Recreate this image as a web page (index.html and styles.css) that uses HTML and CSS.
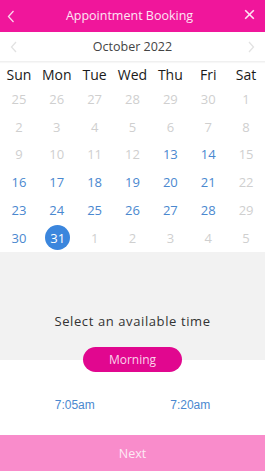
FILE: index.html
```html
<!DOCTYPE html>
<html>
<head>
<meta charset="utf-8">
<link rel="stylesheet" href="styles.css">
</head>
<body>
<div class="app">
  <header class="topbar">
    <svg class="icon back" width="8" height="13" viewBox="0 0 8 13"><path d="M6.5 1 L1.5 6.5 L6.5 12" fill="none" stroke="#fbd6ec" stroke-width="1.3"/></svg>
    <div class="title">Appointment Booking</div>
    <svg class="icon close" width="11" height="11" viewBox="0 0 11 11"><path d="M1.2 1.2 L9.8 9.8 M9.8 1.2 L1.2 9.8" fill="none" stroke="#fde4f3" stroke-width="1.6"/></svg>
  </header>
  <div class="monthbar">
    <svg width="8" height="12" viewBox="0 0 8 12"><path d="M6 1 L1.5 6 L6 11" fill="none" stroke="#e2e2e2" stroke-width="1.3"/></svg>
    <div class="month">October 2022</div>
    <svg width="8" height="12" viewBox="0 0 8 12"><path d="M2 1 L6.5 6 L2 11" fill="none" stroke="#e2e2e2" stroke-width="1.3"/></svg>
  </div>
  <div class="calendar">
    <div class="wd">Sun</div><div class="wd">Mon</div><div class="wd">Tue</div><div class="wd">Wed</div><div class="wd">Thu</div><div class="wd">Fri</div><div class="wd">Sat</div>
    <div class="d off">25</div><div class="d off">26</div><div class="d off">27</div><div class="d off">28</div><div class="d off">29</div><div class="d off">30</div><div class="d off">1</div>
    <div class="d off">2</div><div class="d off">3</div><div class="d off">4</div><div class="d off">5</div><div class="d off">6</div><div class="d off">7</div><div class="d off">8</div>
    <div class="d off">9</div><div class="d off">10</div><div class="d off">11</div><div class="d off">12</div><div class="d on">13</div><div class="d on">14</div><div class="d off">15</div>
    <div class="d on">16</div><div class="d on">17</div><div class="d on">18</div><div class="d on">19</div><div class="d on">20</div><div class="d on">21</div><div class="d off">22</div>
    <div class="d on">23</div><div class="d on">24</div><div class="d on">25</div><div class="d on">26</div><div class="d on">27</div><div class="d on">28</div><div class="d off">29</div>
    <div class="d on">30</div><div class="d sel"><span>31</span></div><div class="d off">1</div><div class="d off">2</div><div class="d off">3</div><div class="d off">4</div><div class="d off">5</div>
  </div>
  <section class="prompt">
    <div class="prompt-text">Select an available time</div>
  </section>
  <div class="period-wrap">
    <div class="period">Morning</div>
  </div>
  <div class="times">
    <div class="time">7:05am</div>
    <div class="time">7:20am</div>
  </div>
  <div class="spacer"></div>
  <footer class="next">Next</footer>
</div>
</body>
</html>
```
FILE: styles.css
```css
* { box-sizing: border-box; }
html, body { margin: 0; padding: 0; background: #fff; }
body { font-family: "Open Sans", "Noto Sans", sans-serif; }
.app { width: 265px; height: 471px; display: flex; flex-direction: column; overflow: hidden; }
.topbar {
  height: 32px; background: #f0169b; display: flex; align-items: center;
  justify-content: space-between; padding: 0 10px 0 7px; flex: none;
}
.topbar .back { margin-top: 1px; }
.topbar .close { margin-top: -4px; }
.title { color: #fde6f4; font-size: 12.5px; margin-top: -1px; }
.monthbar {
  height: 30px; display: flex; align-items: center; justify-content: space-between;
  padding: 0 10px 0 10px; border-bottom: 1px solid #f0f0f0; flex: none;
  box-shadow: 0 1px 1px rgba(0,0,0,0.03);
}
.month { color: #444; font-size: 12.5px; }
.calendar {
  display: grid; grid-template-columns: repeat(7, 1fr);
  grid-template-rows: 23px repeat(6, 27.8px); flex: none;
}
.wd { color: #1a1a1a; font-size: 14px; display: flex; align-items: center; justify-content: center; padding-top: 1px; }
.d { font-size: 13px; display: flex; align-items: center; justify-content: center; }
.d.off { color: #cfcfcf; }
.d.on { color: #4a88cf; }
.d.sel span {
  width: 25px; height: 25px; border-radius: 50%; background: #3b86dd; color: #fff;
  display: flex; align-items: center; justify-content: center; margin-left: 2px;
}
.prompt {
  background: #f2f2f2; height: 108px; display: flex; align-items: flex-end;
  justify-content: center; padding-bottom: 30px; flex: none;
}
.prompt-text { color: #333; font-size: 13px; letter-spacing: 0.6px; }
.period-wrap { display: flex; justify-content: center; margin-top: -13px; flex: none; }
.period {
  width: 99px; height: 25px; border-radius: 13px; background: #e1078f; color: #fbd3ea;
  font-size: 12px; display: flex; align-items: center; justify-content: center;
}
.times { display: grid; grid-template-columns: 1fr 1fr; padding: 0 17px; margin-top: 26px; flex: none; }
.time { font-family: "Liberation Sans", Arial, sans-serif; font-size: 12px; color: #4a88cf; text-align: center; }
.spacer { flex: 1; }
.next {
  height: 36px; background: #f98ccb; color: #fdeaf5; font-size: 12.5px;
  display: flex; align-items: center; justify-content: center; flex: none;
}
```
